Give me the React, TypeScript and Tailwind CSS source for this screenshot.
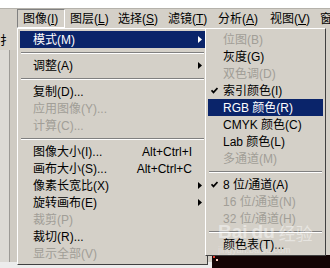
import React from 'react';

const font = "font-['Liberation_Sans','Noto_Sans_CJK_SC',sans-serif]";

type Row =
  | { sep: true }
  | {
      sep?: false;
      label: string;
      shortcut?: string;
      arrow?: boolean;
      disabled?: boolean;
      active?: boolean;
      checked?: boolean;
    };

const mainRows: Row[] = [
  { label: '模式(M)', arrow: true, active: true },
  { sep: true },
  { label: '调整(A)', arrow: true },
  { sep: true },
  { label: '复制(D)...' },
  { label: '应用图像(Y)...', disabled: true },
  { label: '计算(C)...', disabled: true },
  { sep: true },
  { label: '图像大小(I)...', shortcut: 'Alt+Ctrl+I' },
  { label: '画布大小(S)...', shortcut: 'Alt+Ctrl+C' },
  { label: '像素长宽比(X)', arrow: true },
  { label: '旋转画布(E)', arrow: true },
  { label: '裁剪(P)', disabled: true },
  { label: '裁切(R)...' },
  { label: '显示全部(V)', disabled: true },
];

const subRows: Row[] = [
  { label: '位图(B)', disabled: true },
  { label: '灰度(G)' },
  { label: '双色调(D)', disabled: true },
  { label: '索引颜色(I)', checked: true },
  { label: 'RGB 颜色(R)', active: true },
  { label: 'CMYK 颜色(C)' },
  { label: 'Lab 颜色(L)' },
  { label: '多通道(M)', disabled: true },
  { sep: true },
  { label: '8 位/通道(A)', checked: true },
  { label: '16 位/通道(N)', disabled: true },
  { label: '32 位/通道(H)', disabled: true },
  { sep: true },
  { label: '颜色表(T)...' },
];

const barItems = [
  { text: '图像', key: 'I', w: 'w-[48px]', open: true },
  { text: '图层', key: 'L', w: 'w-[48px]' },
  { text: '选择', key: 'S', w: 'w-[50px]' },
  { text: '滤镜', key: 'T', w: 'w-[50px]' },
  { text: '分析', key: 'A', w: 'w-[52px]' },
  { text: '视图', key: 'V', w: 'w-[50px]' },
  { text: '窗', key: '', w: 'w-[40px]' },
];

function Arrow({ white }: { white?: boolean }) {
  return (
    <svg width="4" height="7" viewBox="0 0 4 7">
      <path d="M0 0L4 3.5L0 7Z" fill={white ? '#ffffff' : '#000000'} />
    </svg>
  );
}

function Check({ white }: { white?: boolean }) {
  return (
    <svg width="7" height="7" viewBox="0 0 7 7">
      <path d="M0.5 3.2L2.5 5.4L6.5 1" fill="none" stroke={white ? '#fff' : '#000'} strokeWidth="1.7" />
    </svg>
  );
}

function Separator() {
  return (
    <div className="h-[9px] flex flex-col justify-center px-[1px]">
      <div className="border-t border-t-[#808080] border-b border-b-white" />
    </div>
  );
}

function MenuBar() {
  return (
    <div className="h-[20px] shrink-0 flex border-t border-[#b5b2ab] pl-[17px]">
      {barItems.map((it) => (
        <div
          key={it.text}
          className={`${it.w} shrink-0 flex items-center pl-[5px] whitespace-nowrap ${
            it.open ? 'border-t border-l border-[#808080] border-r border-r-white border-b border-b-white pl-[4px]' : ''
          }`}
        >
          {it.text}
          {it.key && (
            <>
              (<span className="underline">{it.key}</span>)
            </>
          )}
        </div>
      ))}
    </div>
  );
}

function MainMenu() {
  return (
    <div className="absolute left-[17px] top-[28px] w-[191px] bg-[#d4d0c8] border-t border-l border-white border-r border-r-[#404040] border-b border-b-[#404040] p-[2px]">
      {mainRows.map((r, i) =>
        r.sep ? (
          <Separator key={i} />
        ) : (
          <div
            key={i}
            className={`h-[17px] flex items-center whitespace-nowrap ${
              r.active ? 'bg-[#0a246a] text-white' : r.disabled ? 'text-[#a19e97]' : 'text-black'
            }`}
          >
            <span className="pl-[13px] flex-1">{r.label}</span>
            {r.shortcut && <span>{r.shortcut}</span>}
            <span className="w-[13px] shrink-0 flex items-center pl-[6px]">
              {r.arrow && <Arrow white={r.active} />}
            </span>
          </div>
        )
      )}
    </div>
  );
}

function SubMenu() {
  return (
    <div className="absolute left-[205px] top-[28px] w-[121px] bg-[#d4d0c8] border-t border-l border-white border-r border-r-[#404040] border-b border-b-[#404040] p-[2px]">
      {subRows.map((r, i) =>
        r.sep ? (
          <Separator key={i} />
        ) : (
          <div
            key={i}
            className={`h-[17px] flex items-center whitespace-nowrap ${
              r.active ? 'bg-[#0a246a] text-white' : r.disabled ? 'text-[#a19e97]' : 'text-black'
            }`}
          >
            <span className="w-[15px] shrink-0 flex items-center pl-[3px]">
              {r.checked && <Check white={r.active} />}
            </span>
            <span>{r.label}</span>
          </div>
        )
      )}
    </div>
  );
}

export default function App() {
  return (
    <div
      className={`relative w-[330px] h-[268px] overflow-hidden bg-[#d4d0c8] text-[12px] leading-none text-black flex flex-col ${font}`}
    >
      <div className="h-[8px] bg-white shrink-0" />
      <MenuBar />
      <div className="flex flex-1">
        <div className="w-[17px] flex flex-col overflow-hidden">
          <div className="h-[22px] pt-[7px] pl-[0px] text-[12px]">扌</div>
          <div className="flex flex-1">
            <div className="w-[9px] bg-[#dcdad5]" />
            <div className="w-[1px] bg-[#9c9a96]" />
            <div className="flex-1 bg-[#cfcbc3]" />
          </div>
          <div className="h-[6px] bg-[#ececec]" />
        </div>
        <div className="w-[195px] flex flex-col">
          <div className="flex-1" />
          <div className="h-[6px] bg-[#ececec]" />
        </div>
        <div className="flex-1 flex flex-col">
          <div className="flex-1 bg-[#d4d0c8]" />
          <div className="h-[13px] bg-[#140505]" />
        </div>
      </div>
      <MainMenu />
      <SubMenu />
      <div className="absolute left-[213px] top-[256px] w-[2px] h-[2px] bg-[#e04030]" />
      <div className="absolute left-[216px] top-[259px] w-[2px] h-[2px] bg-[#ffcfc0]" />
      <div className="absolute left-[218px] top-[222px] flex items-end gap-[4px] text-white/45 pointer-events-none">
        <span className="text-[19px] font-bold font-['Liberation_Sans',sans-serif]">Bai</span>
        <span className="text-[19px] font-bold font-['Liberation_Sans',sans-serif]">du</span>
        <span className="text-[17px] font-['Noto_Sans_CJK_SC',sans-serif]">经验</span>
      </div>
      <div className="absolute left-[218px] top-[246px] text-[9px] text-white/35 pointer-events-none">
        jingyan.baidu.com
      </div>
    </div>
  );
}
